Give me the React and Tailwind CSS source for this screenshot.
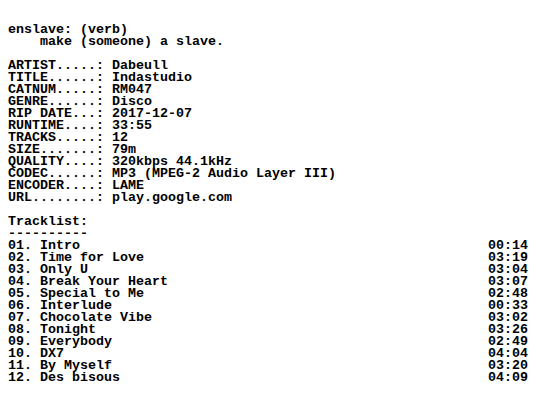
import React from "react";

const info = [
  ["ARTIST.....", "Dabeull"],
  ["TITLE......", "Indastudio"],
  ["CATNUM.....", "RM047"],
  ["GENRE......", "Disco"],
  ["RIP DATE...", "2017-12-07"],
  ["RUNTIME....", "33:55"],
  ["TRACKS.....", "12"],
  ["SIZE.......", "79m"],
  ["QUALITY....", "320kbps 44.1kHz"],
  ["CODEC......", "MP3 (MPEG-2 Audio Layer III)"],
  ["ENCODER....", "LAME"],
  ["URL........", "play.google.com"],
];

const tracks = [
  ["01", "Intro", "00:14"],
  ["02", "Time for Love", "03:19"],
  ["03", "Only U", "03:04"],
  ["04", "Break Your Heart", "03:07"],
  ["05", "Special to Me", "02:48"],
  ["06", "Interlude", "00:33"],
  ["07", "Chocolate Vibe", "03:02"],
  ["08", "Tonight", "03:26"],
  ["09", "Everybody", "02:49"],
  ["10", "DX7", "04:04"],
  ["11", "By Myself", "03:20"],
  ["12", "Des bisous", "04:09"],
];

export default function App() {
  return (
    <div className="min-h-screen bg-white px-2 pt-[24px] text-black font-['Liberation_Mono',monospace] font-bold text-[13.333px] leading-[12px] whitespace-pre">
      <div>enslave: (verb)</div>
      <div>    make (someone) a slave.</div>
      <div className="h-[12px]" />
      {info.map(([k, v]) => (
        <div key={k}>{k}: {v}</div>
      ))}
      <div className="h-[12px]" />
      <div>Tracklist:</div>
      <div>----------</div>
      {tracks.map(([n, t, d]) => (
        <div key={n} className="flex justify-between">
          <span>{n}. {t}</span>
          <span>{d}</span>
        </div>
      ))}
    </div>
  );
}
